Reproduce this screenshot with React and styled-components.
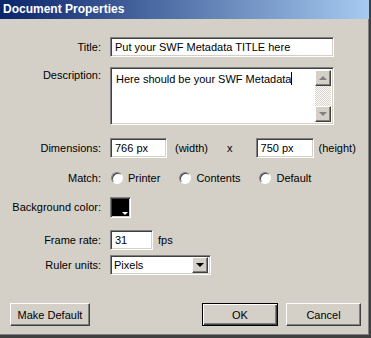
import styled, { createGlobalStyle, css } from "styled-components";

const GlobalStyle = createGlobalStyle`
  html, body { margin: 0; padding: 0; background: #d4d0c8; }
  body { font-family: "Liberation Sans", Arial, sans-serif; font-size: 11px; color: #000; }
`;

const sunken = css`
  border-style: solid;
  border-width: 1px;
  border-color: #808080 #ffffff #ffffff #808080;
  box-shadow: inset 1px 1px 0 #404040, inset -1px -1px 0 #d4d0c8;
`;

const raised = css`
  border-style: solid;
  border-width: 1px;
  border-color: #ffffff #404040 #404040 #ffffff;
  box-shadow: inset -1px -1px 0 #808080, inset 1px 1px 0 #d4d0c8;
`;

export default function App() {
  return (
    <>
      <GlobalStyle />
      <Window>
        <TitleBar>Document Properties</TitleBar>
        <Body>
          <Row $h={20}>
            <Label>Title:</Label>
            <TextBox $w={224} defaultValue="Put your SWF Metadata TITLE here" />
          </Row>

          <Row $h={58} $mt={10} $top>
            <Label $pt={2}>Description:</Label>
            <TextArea>
              <AreaText>
                Here should be your SWF Metadata<Caret />
              </AreaText>
              <ScrollBar>
                <ScrollBtn>
                  <Arrow $up />
                </ScrollBtn>
                <ScrollTrack />
                <ScrollBtn>
                  <Arrow />
                </ScrollBtn>
              </ScrollBar>
            </TextArea>
          </Row>

          <Row $h={20} $mt={13}>
            <Label>Dimensions:</Label>
            <TextBox $w={57} defaultValue="766 px" />
            <Unit $ml={8}>(width)</Unit>
            <Unit $ml={19}>x</Unit>
            <TextBox $w={58} $ml={23} defaultValue="750 px" />
            <Unit $ml={5}>(height)</Unit>
          </Row>

          <Row $h={20} $mt={10}>
            <Label>Match:</Label>
            <Options>
              {["Printer", "Contents", "Default"].map((o) => (
                <Option key={o}>
                  <Radio />
                  {o}
                </Option>
              ))}
            </Options>
          </Row>

          <Row $h={20} $mt={9}>
            <Label>Background color:</Label>
            <Swatch>
              <SwatchCorner />
            </Swatch>
          </Row>

          <Row $h={20} $mt={13}>
            <Label>Frame rate:</Label>
            <TextBox $w={43} defaultValue="31" />
            <Unit $ml={5}>fps</Unit>
          </Row>

          <Row $h={20} $mt={5}>
            <Label>Ruler units:</Label>
            <Select>
              <SelectText>Pixels</SelectText>
              <DropBtn>
                <DropArrow />
              </DropBtn>
            </Select>
          </Row>

          <Footer>
            <Button $w={80}>Make Default</Button>
            <Right>
              <Button $w={76} $default>OK</Button>
              <Button $w={75}>Cancel</Button>
            </Right>
          </Footer>
        </Body>
      </Window>
    </>
  );
}

const Window = styled.div`
  width: 371px;
  height: 338px;
  box-sizing: border-box;
  background: #d4d0c8;
  border-right: 2px solid #404040;
  border-bottom: 3px solid #404040;
  box-shadow: inset -1px -1px 0 #808080;
  display: flex;
  flex-direction: column;
`;

const TitleBar = styled.div`
  height: 19px;
  line-height: 19px;
  padding-left: 3px;
  background: linear-gradient(to right, #0a246a, #a6caf0);
  color: #fff;
  font-weight: bold;
  font-size: 12px;
`;

const Body = styled.div`
  flex: 1;
  padding-top: 18px;
  display: flex;
  flex-direction: column;
`;

const Row = styled.div`
  display: flex;
  align-items: ${(p) => (p.$top ? "flex-start" : "center")};
  height: ${(p) => p.$h}px;
  margin-top: ${(p) => p.$mt || 0}px;
`;

const Label = styled.div`
  width: 101px;
  margin-right: 9px;
  text-align: right;
  white-space: nowrap;
  padding-top: ${(p) => p.$pt || 0}px;
`;

const TextBox = styled.input`
  ${sunken};
  box-sizing: border-box;
  width: ${(p) => p.$w}px;
  height: 20px;
  margin: 0 0 0 ${(p) => p.$ml || 0}px;
  padding: 0 0 0 4px;
  background: #fff;
  font: inherit;
  color: #000;
  outline: none;
`;

const TextArea = styled.div`
  ${sunken};
  box-sizing: border-box;
  width: 224px;
  height: 58px;
  background: #fff;
  display: flex;
  padding: 2px;
`;

const AreaText = styled.div`
  flex: 1;
  padding: 2px 0 0 3px;
`;

const Caret = styled.span`
  display: inline-block;
  width: 1px;
  height: 13px;
  background: #000;
  vertical-align: -2px;
`;

const ScrollBar = styled.div`
  width: 16px;
  display: flex;
  flex-direction: column;
`;

const ScrollBtn = styled.div`
  ${raised};
  box-sizing: border-box;
  height: 16px;
  background: #d4d0c8;
  display: flex;
  align-items: center;
  justify-content: center;
`;

const ScrollTrack = styled.div`
  flex: 1;
  background-color: #fff;
  background-image: linear-gradient(45deg, #d4d0c8 25%, transparent 25%, transparent 75%, #d4d0c8 75%),
    linear-gradient(45deg, #d4d0c8 25%, transparent 25%, transparent 75%, #d4d0c8 75%);
  background-size: 2px 2px;
  background-position: 0 0, 1px 1px;
`;

const Arrow = styled.div`
  width: 0;
  height: 0;
  border-left: 4px solid transparent;
  border-right: 4px solid transparent;
  ${(p) => (p.$up ? "border-bottom: 4px solid #808080;" : "border-top: 4px solid #808080;")}
`;

const Unit = styled.span`
  margin-left: ${(p) => p.$ml || 0}px;
`;

const Options = styled.div`
  display: flex;
  gap: 19px;
  padding-left: 1px;
`;

const Option = styled.label`
  display: flex;
  align-items: center;
  gap: 5px;
`;

const Radio = styled.span`
  width: 12px;
  height: 12px;
  box-sizing: border-box;
  border-radius: 50%;
  background: #fff;
  border: 1px solid;
  border-color: #808080 #ffffff #ffffff #808080;
  box-shadow: inset 1px 1px 0 #404040;
`;

const Swatch = styled.div`
  ${sunken};
  box-sizing: border-box;
  width: 21px;
  height: 21px;
  background: #000;
  position: relative;
`;

const SwatchCorner = styled.div`
  position: absolute;
  right: 2px;
  bottom: 2px;
  width: 0;
  height: 0;
  border-left: 3px solid transparent;
  border-right: 3px solid transparent;
  border-top: 3px solid #fff;
`;

const Select = styled.div`
  ${sunken};
  box-sizing: border-box;
  width: 101px;
  height: 20px;
  background: #fff;
  display: flex;
  align-items: center;
  padding: 2px;
`;

const SelectText = styled.span`
  flex: 1;
  padding-left: 1px;
`;

const DropBtn = styled.div`
  ${raised};
  box-sizing: border-box;
  width: 16px;
  height: 16px;
  background: #d4d0c8;
  display: flex;
  align-items: center;
  justify-content: center;
`;

const DropArrow = styled.div`
  width: 0;
  height: 0;
  border-left: 4px solid transparent;
  border-right: 4px solid transparent;
  border-top: 4px solid #000;
`;

const Footer = styled.div`
  margin-top: 28px;
  padding: 0 8px 0 10px;
  display: flex;
  justify-content: space-between;
`;

const Right = styled.div`
  display: flex;
  gap: 8px;
`;

const Button = styled.button`
  ${raised};
  box-sizing: border-box;
  width: ${(p) => p.$w}px;
  height: 23px;
  padding: 0;
  background: #d4d0c8;
  font: inherit;
  color: #000;
  ${(p) =>
    p.$default &&
    css`
      border: 1px solid #000;
      box-shadow: inset 1px 1px 0 #ffffff, inset -1px -1px 0 #404040, inset -2px -2px 0 #808080;
    `}
`;
